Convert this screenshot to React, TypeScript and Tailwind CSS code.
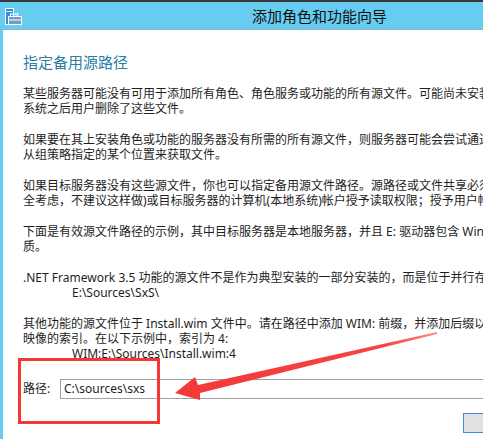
import React from "react";

const font = {
  fontFamily: '"Noto Sans", "Noto Sans CJK SC", sans-serif',
};

function Line({ children, indent = false }: { children: React.ReactNode; indent?: boolean }) {
  return (
    <div className={"whitespace-nowrap h-[15px] leading-[15px] " + (indent ? "pl-[49px]" : "")}>
      {children}
    </div>
  );
}

function WizardIcon() {
  return (
    <svg width="17" height="17" viewBox="0 0 17 17">
      <rect x="0.5" y="0.5" width="8" height="16" fill="#2f8fdc" stroke="#ffffff" strokeWidth="1" />
      <rect x="1.5" y="3" width="6" height="1" fill="#ffffff" />
      <rect x="5.5" y="6" width="7" height="3" fill="none" stroke="#ffffff" strokeWidth="1.2" />
      <rect x="3.5" y="8.5" width="13" height="8" fill="#6f9dc4" stroke="#ffffff" strokeWidth="1" />
      <rect x="4" y="11.5" width="12" height="1" fill="#ffffff" />
    </svg>
  );
}

export default function App() {
  return (
    <div
      className="relative w-[483px] h-[439px] overflow-hidden bg-[#66ccf0] flex flex-col text-[#1e1e1e]"
      style={font}
    >
      <div className="h-[2px] bg-[#3a3a3a] shrink-0" />
      <div className="h-[28px] shrink-0 flex items-center border-b border-[#8db3c6]">
        <div className="pl-[5px] pt-[1px]">
          <WizardIcon />
        </div>
        <div className="pl-[230px] text-[15px] text-[#111] leading-[20px] whitespace-nowrap">
          添加角色和功能向导
        </div>
      </div>
      <div className="flex-1 ml-[3px] bg-white pl-[20px] pt-[22px] text-[12px] overflow-hidden">
        <div className="text-[15px] leading-[20px] text-[#2a7ea6] whitespace-nowrap">指定备用源路径</div>

        <div className="mt-[14px]">
          <Line>某些服务器可能没有可用于添加所有角色、角色服务或功能的所有源文件。可能尚未安装这些源文件，或者在安装操作</Line>
          <Line>系统之后用户删除了这些文件。</Line>
        </div>
        <div className="mt-[16px]">
          <Line>如果要在其上安装角色或功能的服务器没有所需的所有源文件，则服务器可能会尝试通过 Windows 更新或</Line>
          <Line>从组策略指定的某个位置来获取文件。</Line>
        </div>
        <div className="mt-[16px]">
          <Line>如果目标服务器没有这些源文件，你也可以指定备用源文件路径。源路径或文件共享必须为 Everyone 组(出于安</Line>
          <Line>全考虑，不建议这样做)或目标服务器的计算机(本地系统)帐户授予读取权限；授予用户帐户访问权限是不够的。</Line>
        </div>
        <div className="mt-[16px]">
          <Line>下面是有效源文件路径的示例，其中目标服务器是本地服务器，并且 E: 驱动器包含 Windows Server 安装介</Line>
          <Line>质。</Line>
        </div>
        <div className="mt-[16px]">
          <Line>.NET Framework 3.5 功能的源文件不是作为典型安装的一部分安装的，而是位于并行存储文件夹中：</Line>
          <Line indent>E:\Sources\SxS\</Line>
        </div>
        <div className="mt-[16px]">
          <Line>其他功能的源文件位于 Install.wim 文件中。请在路径中添加 WIM: 前缀，并添加后缀以指定要从中获取源文件的</Line>
          <Line>映像的索引。在以下示例中，索引为 4:</Line>
          <Line indent>WIM:E:\Sources\Install.wim:4</Line>
        </div>

        <div className="mt-[18px] flex items-center">
          <div className="w-[37px] shrink-0 whitespace-nowrap">路径:</div>
          <div className="w-[440px] shrink-0 h-[20px] border border-[#a0a0a0] flex items-center pl-[3px] whitespace-nowrap">
            C:\sources\sxs
          </div>
        </div>

        <div className="mt-[14px] pl-[440px] flex">
          <div className="w-[75px] h-[20px] shrink-0 bg-[#e1e1e1] border border-[#3c8ce0]" />
        </div>
      </div>

      <div className="absolute left-[18px] top-[358px] w-[142px] h-[66px] border-[3px] border-[#f43838]" />

      <svg className="absolute left-0 top-0" width="483" height="439" viewBox="0 0 483 439">
        <defs>
          <linearGradient id="ar" x1="175" y1="393" x2="437" y2="333" gradientUnits="userSpaceOnUse">
            <stop offset="0" stopColor="#f43838" />
            <stop offset="0.8" stopColor="#f54444" />
            <stop offset="1" stopColor="#ff8a8a" />
          </linearGradient>
        </defs>
        <polygon
          points="175,393 195,377 198,385 437,332 437,334 200,393 200,400"
          fill="url(#ar)"
        />
      </svg>
    </div>
  );
}
